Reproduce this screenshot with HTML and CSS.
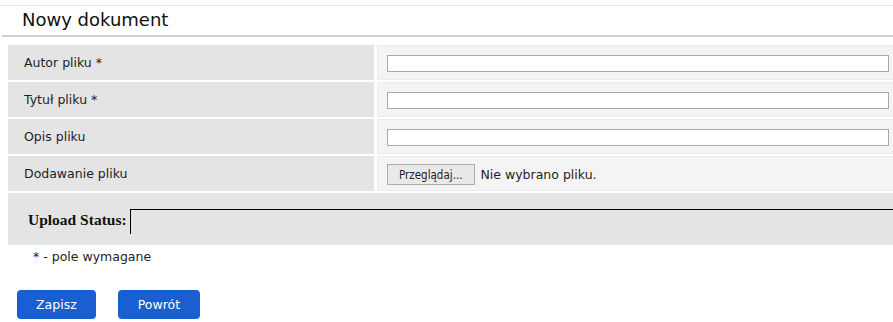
FILE: index.html
```html
<!DOCTYPE html>
<html lang="pl">
<head>
<meta charset="utf-8">
<title>Nowy dokument</title>
<link rel="stylesheet" href="styles.css">
</head>
<body>
<div class="page">
  <h1 class="title">Nowy dokument</h1>
  <div class="form">
    <div class="label">Autor pliku *</div>
    <div class="value"><input class="text" type="text"></div>
    <div class="label">Tytuł pliku *</div>
    <div class="value"><input class="text" type="text"></div>
    <div class="label">Opis pliku</div>
    <div class="value"><input class="text" type="text"></div>
    <div class="label">Dodawanie pliku</div>
    <div class="value"><button class="browse" type="button">Przeglądaj...</button><span class="nofile">Nie wybrano pliku.</span></div>
    <div class="upload">
      <span class="upload-label">Upload Status:</span>
      <div class="upload-box"></div>
    </div>
  </div>
  <p class="note">* - pole wymagane</p>
  <div class="actions">
    <button class="btn" type="button">Zapisz</button>
    <button class="btn" type="button">Powrót</button>
  </div>
</div>
</body>
</html>
```
FILE: styles.css
```css
html, body {
  margin: 0;
  padding: 0;
  background: #fff;
  overflow: hidden;
}
body {
  font-family: "DejaVu Sans", Verdana, sans-serif;
  color: #1e1e1e;
  font-size: 12.5px;
}
.page {
  margin-top: 5px;
  border-top: 1px solid #e6e6e6;
  width: 893px;
}
.title {
  margin: 0 0 0 2px;
  padding: 0 0 0 20px;
  height: 29px;
  line-height: 27px;
  font-size: 18px;
  font-weight: normal;
  color: #111;
  border-bottom: 2px solid #d2d2d2;
}
.form {
  margin: 8px 0 0 8px;
  display: grid;
  grid-template-columns: 366px 520px;
  grid-template-rows: 35px 35px 35px 35px 52px;
  column-gap: 3px;
  row-gap: 2px;
}
.label {
  background: #e4e4e4;
  display: flex;
  align-items: center;
  padding-left: 16px;
}
.value {
  background: #f4f4f4;
  border: 1px solid #ececec;
  display: flex;
  align-items: center;
  padding-left: 9px;
}
.text {
  box-sizing: border-box;
  width: 502px;
  height: 17px;
  margin: 1px 0 0 0;
  border: 1px solid #a9a9a9;
  background: #fff;
  padding: 0;
}
.browse {
  height: 21px;
  padding: 0 11px;
  margin: 2px 0 0 0;
  font-family: "DejaVu Sans Condensed", "DejaVu Sans", sans-serif;
  font-size: 11.5px;
  color: #222;
  background: #e9e9e9;
  border: 1px solid #adadad;
  border-radius: 0;
}
.nofile {
  margin-left: 6px;
  margin-top: 2px;
}
.upload {
  grid-column: 1 / 3;
  background: #e4e4e4;
  display: flex;
  align-items: center;
  padding-left: 20px;
  margin-right: -20px;
}
.upload-label {
  font-family: "Liberation Serif", "Times New Roman", serif;
  font-weight: bold;
  font-size: 15.5px;
  color: #111;
  margin-top: 2px;
}
.upload-box {
  margin-left: 3px;
  margin-top: 4px;
  height: 24px;
  flex: 1;
  border-top: 1px solid #000;
  border-left: 1px solid #000;
}
.note {
  margin: 0;
  padding: 5px 0 0 33px;
  height: 40px;
  line-height: 14px;
}
.actions {
  display: flex;
  gap: 22px;
  padding-left: 17px;
}
.btn {
  height: 29px;
  padding: 0 19px;
  border: none;
  border-radius: 4px;
  background: #1a5fd1;
  color: #fff;
  font-family: "DejaVu Sans", Verdana, sans-serif;
  font-size: 12.5px;
}
.btn + .btn {
  padding: 0 20px;
}
```
